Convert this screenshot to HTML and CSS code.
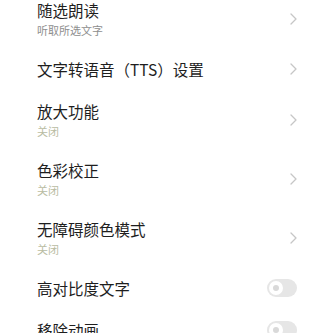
FILE: index.html
```html
<!DOCTYPE html>
<html lang="zh-CN">
<head>
<meta charset="utf-8">
<link rel="stylesheet" href="styles.css">
</head>
<body>
<div class="list">
  <div class="row two">
    <div class="text">
      <div class="title">随选朗读</div>
      <div class="sub">听取所选文字</div>
    </div>
    <svg class="chev" viewBox="0 0 7 12" width="7" height="12"><path d="M1 1 L6 6 L1 11" fill="none" stroke="#c6c6c6" stroke-width="1.3" stroke-linecap="round" stroke-linejoin="round"/></svg>
  </div>
  <div class="row one">
    <div class="text">
      <div class="title">文字转语音（TTS）设置</div>
    </div>
    <svg class="chev" viewBox="0 0 7 12" width="7" height="12"><path d="M1 1 L6 6 L1 11" fill="none" stroke="#c6c6c6" stroke-width="1.3" stroke-linecap="round" stroke-linejoin="round"/></svg>
  </div>
  <div class="row two">
    <div class="text">
      <div class="title">放大功能</div>
      <div class="sub off">关闭</div>
    </div>
    <svg class="chev" viewBox="0 0 7 12" width="7" height="12"><path d="M1 1 L6 6 L1 11" fill="none" stroke="#c6c6c6" stroke-width="1.3" stroke-linecap="round" stroke-linejoin="round"/></svg>
  </div>
  <div class="row two">
    <div class="text">
      <div class="title">色彩校正</div>
      <div class="sub off">关闭</div>
    </div>
    <svg class="chev" viewBox="0 0 7 12" width="7" height="12"><path d="M1 1 L6 6 L1 11" fill="none" stroke="#c6c6c6" stroke-width="1.3" stroke-linecap="round" stroke-linejoin="round"/></svg>
  </div>
  <div class="row two">
    <div class="text">
      <div class="title">无障碍颜色模式</div>
      <div class="sub off">关闭</div>
    </div>
    <svg class="chev" viewBox="0 0 7 12" width="7" height="12"><path d="M1 1 L6 6 L1 11" fill="none" stroke="#c6c6c6" stroke-width="1.3" stroke-linecap="round" stroke-linejoin="round"/></svg>
  </div>
  <div class="row one">
    <div class="text">
      <div class="title">高对比度文字</div>
    </div>
    <div class="toggle"><div class="knob"></div></div>
  </div>
  <div class="row one">
    <div class="text">
      <div class="title">移除动画</div>
    </div>
    <div class="toggle"><div class="knob"></div></div>
  </div>
</div>
</body>
</html>
```
FILE: styles.css
```css
html, body {
  margin: 0;
  padding: 0;
  background: #ffffff;
  overflow: hidden;
}
body {
  width: 317px;
  height: 333px;
  font-family: "Noto Sans CJK SC", "Noto Sans", sans-serif;
}
.list {
  margin-top: -11px;
  display: flex;
  flex-direction: column;
}
.row {
  display: flex;
  align-items: center;
  justify-content: space-between;
  padding: 0 20px 0 37px;
  box-sizing: border-box;
}
.row.two {
  height: 59px;
  padding-top: 1px;
}
.row.one {
  height: 42px;
}
.text {
  display: flex;
  flex-direction: column;
}
.title {
  font-size: 15.5px;
  line-height: 20px;
  color: #1e1e1e;
}
.sub {
  font-size: 11px;
  line-height: 15px;
  margin-top: 3px;
  color: #8e8e8e;
}
.sub.off {
  color: #b9bca2;
}
.chev {
  display: block;
  margin-right: 0;
}
.toggle {
  width: 30px;
  height: 18px;
  border-radius: 9px;
  background: #e6e6e6;
  display: flex;
  align-items: center;
  padding-left: 2px;
  box-sizing: border-box;
}
.knob {
  width: 14px;
  height: 14px;
  border-radius: 50%;
  background: #d9d9d9;
  border: 4px solid #ffffff;
  box-sizing: border-box;
}
```
